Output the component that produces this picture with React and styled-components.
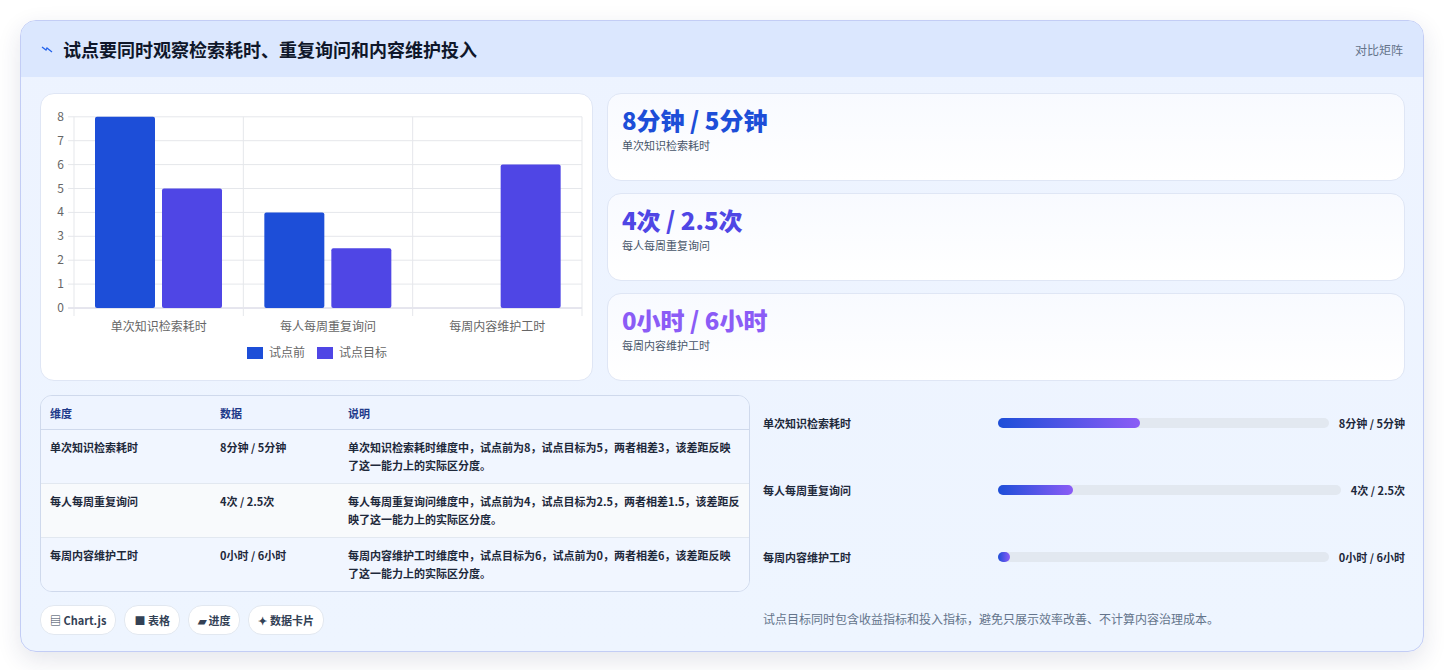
import React from "react";
import styled, { createGlobalStyle } from "styled-components";

const Global = createGlobalStyle`
  body { margin: 0; background: #fff; font-family: "Noto Sans CJK SC", "Noto Sans", sans-serif; }
`;
const Page = styled.div`padding: 20px 20px 20px 20px; width: 1444px; box-sizing: border-box;`;
const Card = styled.div`
  border: 1px solid #c3cdf5; border-radius: 16px; overflow: hidden;
  box-shadow: 0 8px 24px rgba(30,41,90,0.12);
  background: linear-gradient(180deg, #edf3ff, #eef5ff);
`;
const Header = styled.div`
  height: 56px; background: #dbe7fe; display: flex; align-items: center;
  justify-content: space-between; padding: 0 20px 0 20px;
`;
const Title = styled.h1`
  margin: 0; font-size: 18px; font-weight: 700; color: #0f172a; display: flex; align-items: center; gap: 10px;
`;
const Tag = styled.span`font-size: 12px; color: #64748b;`;
const Body = styled.div`padding: 16px 18px 16px 19px;`;
const TopGrid = styled.div`display: grid; grid-template-columns: 553px 1fr; gap: 14px;`;
const Panel = styled.div`
  background: #fff; border: 1px solid #dfe6f5; border-radius: 14px; height: 288px; box-sizing: border-box;
`;
const Stats = styled.div`display: flex; flex-direction: column; gap: 12px;`;
const Stat = styled.div`
  height: 88px; box-sizing: border-box; padding: 10px 14px; border-radius: 14px;
  border: 1px solid #dfe6f5; background: linear-gradient(180deg, #f8faff, #fff);
`;
const StatNum = styled.div`font-size: 24px; font-weight: 800; color: ${p => p.c}; line-height: 32px;`;
const StatLabel = styled.div`font-size: 11px; color: #475569; margin-top: 1px;`;
const BottomGrid = styled.div`display: grid; grid-template-columns: 710px 1fr; gap: 13px; margin-top: 14px;`;
const Table = styled.table`
  width: 100%; border-collapse: separate; border-spacing: 0; border: 1px solid #cfd9ec; border-radius: 12px;
  overflow: hidden; font-size: 11px; color: #1e293b; font-weight: 600;
`;
const Th = styled.th`
  text-align: left; font-weight: 700; color: #1e3a8a; height: 33px; padding: 0 9px; background: #eef4ff;
  border-bottom: 1px solid #cfd9ec;
`;
const Td = styled.td`
  padding: 8px 9px 9px; vertical-align: top; line-height: 18px;
  background: ${p => p.alt ? "#f8fafc" : "#f1f6ff"};
  border-bottom: ${p => p.last ? "none" : "1px solid #e2e8f0"};
`;
const Chips = styled.div`display: flex; gap: 8px; margin-top: 13px;`;
const Chip = styled.span`
  display: inline-flex; align-items: center; gap: 3px; height: 28px; padding: 0 9px; border-radius: 14px;
  background: #fff; border: 1px solid #e2e8f0; font-size: 11px; font-weight: 600; color: #334155;
`;
const Right = styled.div`display: flex; flex-direction: column; padding-top: 18px;`;
const PRow = styled.div`
  display: flex; align-items: center; height: 20px; margin-bottom: 47px; font-size: 11px; font-weight: 600; color: #1e293b;
`;
const PLabel = styled.div`width: 235px; flex: none;`;
const Track = styled.div`flex: 1; height: 10px; border-radius: 5px; background: #e2e8f0; margin-right: 10px;`;
const Fill = styled.div`height: 100%; border-radius: 5px; background: linear-gradient(90deg, #1d4ed8, #8b5cf6); min-width: 12px;`;
const Note = styled.div`font-size: 12px; color: #64748b; margin-top: -4px;`;

const rows = [
  ["单次知识检索耗时", "8分钟 / 5分钟", "单次知识检索耗时维度中，试点前为8，试点目标为5，两者相差3，该差距反映了这一能力上的实际区分度。"],
  ["每人每周重复询问", "4次 / 2.5次", "每人每周重复询问维度中，试点前为4，试点目标为2.5，两者相差1.5，该差距反映了这一能力上的实际区分度。"],
  ["每周内容维护工时", "0小时 / 6小时", "每周内容维护工时维度中，试点目标为6，试点前为0，两者相差6，该差距反映了这一能力上的实际区分度。"],
];
const progress = [["单次知识检索耗时", "8分钟 / 5分钟", 43], ["每人每周重复询问", "4次 / 2.5次", 22], ["每周内容维护工时", "0小时 / 6小时", 0]];

function Chart() {
  const x0 = 33, x1 = 541, y0 = 214, u = 23.9;
  const cw = (x1 - x0) / 3;
  const data = [[8, 5], [4, 2.5], [0, 6]];
  const labels = ["单次知识检索耗时", "每人每周重复询问", "每周内容维护工时"];
  const tf = { fontFamily: "'Noto Sans CJK SC', sans-serif", fontSize: 12, fill: "#666" };
  return (
    <svg width="553" height="288" viewBox="0 0 553 288">
      {[0,1,2,3,4,5,6,7,8].map(i => (
        <g key={i}>
          <line x1={x0 - 6} x2={x1} y1={y0 - i * u} y2={y0 - i * u} stroke={i === 0 ? "#ccd" : "#e5e7eb"} />
          <text x={x0 - 10} y={y0 - i * u + 4} textAnchor="end" {...tf}>{i}</text>
        </g>
      ))}
      {[0,1,2,3].map(i => <line key={i} x1={x0 + i * cw} x2={x0 + i * cw} y1={y0 - 8 * u} y2={y0 + 8} stroke="#e5e7eb" />)}
      {data.map((d, i) => d.map((v, j) => v > 0 && (
        <rect key={i + "" + j} x={x0 + i * cw + 21 + j * 67} y={y0 - v * u} width={60} height={v * u} rx={2}
          fill={j ? "#4f46e5" : "#1d4ed8"} />
      )))}
      {labels.map((l, i) => <text key={l} x={x0 + i * cw + cw / 2} y={y0 + 23} textAnchor="middle" {...tf}>{l}</text>)}
      <rect x={206} y={253} width={16} height={12} fill="#1d4ed8" />
      <text x={228} y={263} {...tf}>试点前</text>
      <rect x={276} y={253} width={16} height={12} fill="#4f46e5" />
      <text x={298} y={263} {...tf}>试点目标</text>
    </svg>
  );
}

export default function App() {
  return (
    <Page>
      <Global />
      <Card>
        <Header>
          <Title>
            <svg width="12" height="8" viewBox="0 0 12 8"><path d="M1 2 L5 5 L6 3 L11 7" stroke="#2563eb" strokeWidth="1.3" fill="none" /></svg>
            试点要同时观察检索耗时、重复询问和内容维护投入
          </Title>
          <Tag>对比矩阵</Tag>
        </Header>
        <Body>
          <TopGrid>
            <Panel><Chart /></Panel>
            <Stats>
              <Stat><StatNum c="#1d4ed8">8分钟 / 5分钟</StatNum><StatLabel>单次知识检索耗时</StatLabel></Stat>
              <Stat><StatNum c="#4f46e5">4次 / 2.5次</StatNum><StatLabel>每人每周重复询问</StatLabel></Stat>
              <Stat><StatNum c="#8b5cf6">0小时 / 6小时</StatNum><StatLabel>每周内容维护工时</StatLabel></Stat>
            </Stats>
          </TopGrid>
          <BottomGrid>
            <div>
              <Table>
                <colgroup><col width="170" /><col width="128" /><col /></colgroup>
                <thead><tr><Th>维度</Th><Th>数据</Th><Th>说明</Th></tr></thead>
                <tbody>
                  {rows.map((r, i) => (
                    <tr key={i}>{r.map((c, j) => <Td key={j} alt={i === 1} last={i === 2}>{c}</Td>)}</tr>
                  ))}
                </tbody>
              </Table>
              <Chips>
                <Chip>▤ Chart.js</Chip><Chip>■ 表格</Chip><Chip>▰ 进度</Chip><Chip>✦ 数据卡片</Chip>
              </Chips>
            </div>
            <Right>
              {progress.map(([l, v, p]) => (
                <PRow key={l}>
                  <PLabel>{l}</PLabel>
                  <Track><Fill style={{ width: p + "%" }} /></Track>
                  <span>{v}</span>
                </PRow>
              ))}
              <Note>试点目标同时包含收益指标和投入指标，避免只展示效率改善、不计算内容治理成本。</Note>
            </Right>
          </BottomGrid>
        </Body>
      </Card>
    </Page>
  );
}
